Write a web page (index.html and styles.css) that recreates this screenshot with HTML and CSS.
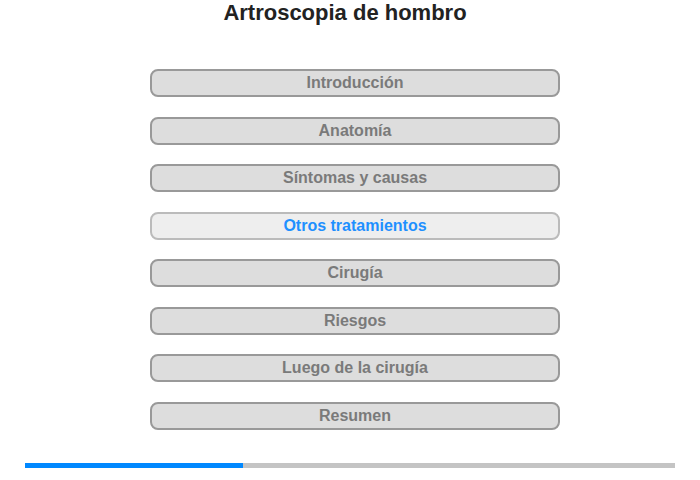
FILE: index.html
```html
<!DOCTYPE html>
<html>

<head>
    <meta charset="UTF-8">
    <title>Artroscopia de hombro</title>
    <link rel="stylesheet" href="styles.css">
</head>

<body>
    <div class="page">
        <h1 class="title">Artroscopia de hombro</h1>
        <ul class="menu">
            <li><a href="#" class="item">Introducción</a></li>
            <li><a href="#" class="item">Anatomía</a></li>
            <li><a href="#" class="item">Síntomas y causas</a></li>
            <li><a href="#" class="item active">Otros tratamientos</a></li>
            <li><a href="#" class="item">Cirugía</a></li>
            <li><a href="#" class="item">Riesgos</a></li>
            <li><a href="#" class="item">Luego de la cirugía</a></li>
            <li><a href="#" class="item">Resumen</a></li>
        </ul>
        <div class="progress">
            <div class="bar" style="width: 33.5%"></div>
        </div>
    </div>
</body>

</html>
```

FILE: styles.css
```css
@charset "UTF-8";
/* reset */
body,
h1,
ul,
li {
    margin: 0;
    padding: 0;
}

ul {
    list-style: none;
}

a {
    text-decoration: none;
}

body {
    font: 16px/1.2 "Liberation Sans", Arial, sans-serif;
    background: #fff;
}

.page {
    width: 700px;
}

.title {
    font-size: 22px;
    font-weight: bold;
    color: #222;
    text-align: center;
    line-height: 24px;
    padding-top: 1px;
    margin-right: 10px;
}

.menu {
    display: flex;
    flex-direction: column;
    gap: 19.5px;
    margin: 44px 0 0 150px;
    width: 410px;
}

.item {
    display: block;
    height: 24px;
    line-height: 24px;
    border: 2px solid #999;
    border-radius: 8px;
    background: #ddd;
    color: #7a7a7a;
    font-weight: bold;
    text-align: center;
}

.item.active {
    background: #eee;
    border-color: #bbb;
    color: #1e90ff;
}

.progress {
    margin: 33px 25px 0;
    height: 5px;
    background: #c4c4c4;
}

.bar {
    height: 100%;
    background: #0088ff;
}
```
